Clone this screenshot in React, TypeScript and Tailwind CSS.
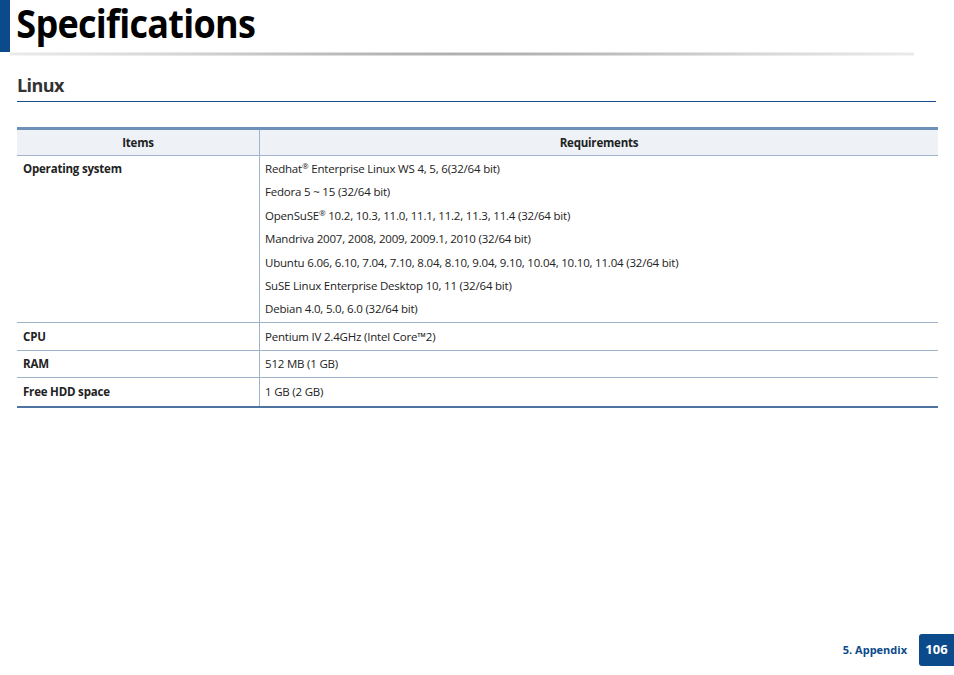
const F = { fontFamily: '"Open Sans", "Liberation Sans", sans-serif' }

const os = [
  <>Redhat<sup className="text-[8px]">®</sup> Enterprise Linux WS 4, 5, 6(32/64 bit)</>,
  'Fedora 5 ~ 15 (32/64 bit)',
  <>OpenSuSE<sup className="text-[8px]">®</sup> 10.2, 10.3, 11.0, 11.1, 11.2, 11.3, 11.4 (32/64 bit)</>,
  'Mandriva 2007, 2008, 2009, 2009.1, 2010 (32/64 bit)',
  'Ubuntu 6.06, 6.10, 7.04, 7.10, 8.04, 8.10, 9.04, 9.10, 10.04, 10.10, 11.04 (32/64 bit)',
  'SuSE Linux Enterprise Desktop 10, 11 (32/64 bit)',
  'Debian 4.0, 5.0, 6.0 (32/64 bit)',
]

const rows = [
  ['CPU', 'Pentium IV 2.4GHz (Intel Core™2)'],
  ['RAM', '512 MB (1 GB)'],
  ['Free HDD space', '1 GB (2 GB)'],
]

export default function App() {
  return (
    <div className="relative w-[954px] h-[675px] bg-white text-[#222]" style={F}>
      <div className="flex h-[52px]">
        <div className="w-[10px] bg-[#0b4a8b]" />
        <h1 className="pl-[7px] text-[40px] leading-[46px] font-bold tracking-[-0.8px] text-black [transform:scaleX(0.9)] origin-left whitespace-nowrap">Specifications</h1>
      </div>
      <div className="ml-[10px] mr-[40px] h-[4px] bg-[radial-gradient(ellipse_at_center,#9a9a9a_0%,#d8d8d8_50%,#ffffff_100%)]" />
      <div className="mx-[17px] w-[919px] mt-[17px] border-b border-[#1a4f8a] pb-[4px]">
        <h2 className="text-[18px] font-bold text-[#333] leading-[24px] tracking-[-0.6px]">Linux</h2>
      </div>
      <div className="ml-[17px] w-[921px] mt-[25px] border-t-[3px] border-[#6d90b8] border-b-2 border-b-[#4e73a0] text-[11.5px] tracking-[-0.2px]">
        <div className="flex h-[26px] bg-[#eef2f6] border-b border-[#9fb3cc] font-bold items-center">
          <div className="w-[243px] text-center border-r border-[#9fb3cc] h-full flex items-center justify-center">Items</div>
          <div className="flex-1 text-center">Requirements</div>
        </div>
        <div className="flex border-b border-[#9fb3cc]">
          <div className="w-[243px] border-r border-[#9fb3cc] px-[6px] pt-[4px] font-bold">Operating system</div>
          <div className="flex-1 px-[5px] pt-[4px] pb-[5px] flex flex-col gap-[6.4px]">
            {os.map((t, i) => <div key={i} className="leading-[17px]">{t}</div>)}
          </div>
        </div>
        {rows.map(([a, b], i) => (
          <div key={a} className={`flex h-[27.5px] ${i < 2 ? 'border-b border-[#9fb3cc]' : ''}`}>
            <div className="w-[243px] border-r border-[#9fb3cc] px-[6px] flex items-center font-bold">{a}</div>
            <div className="flex-1 px-[5px] flex items-center">{b}</div>
          </div>
        ))}
      </div>
      <div className="absolute right-0 bottom-[9px] flex items-center gap-[12px]">
        <span className="text-[11px] font-bold text-[#0b4a8b]">5. Appendix</span>
        <span className="w-[35px] h-[32px] bg-[#0b4a8b] text-white font-bold text-[13px] flex items-center justify-center rounded-tl-[3px] rounded-bl-[3px]">106</span>
      </div>
    </div>
  )
}
